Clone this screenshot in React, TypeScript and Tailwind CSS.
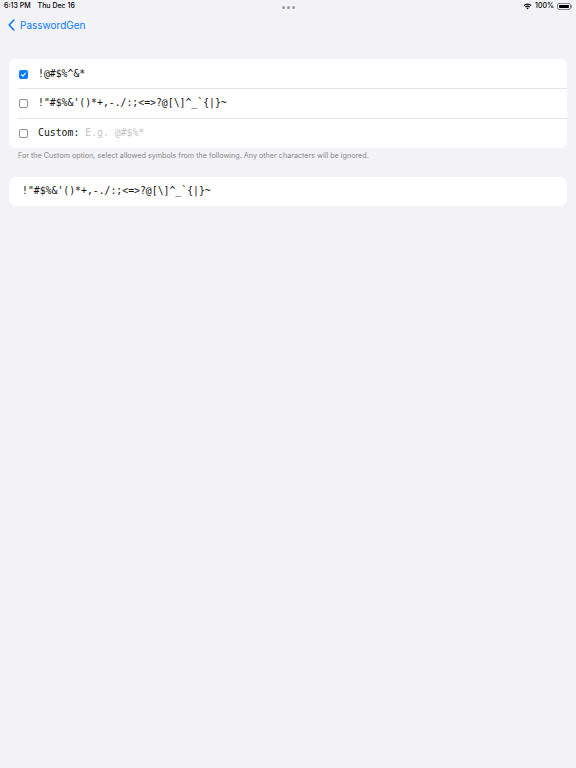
import React from "react";

function Checkbox({ checked }: { checked: boolean }) {
  if (checked) {
    return (
      <div className="w-[9px] h-[9px] rounded-[2px] bg-[#0a7aff] flex items-center justify-center">
        <svg width="7" height="7" viewBox="0 0 10 10" fill="none">
          <path d="M2 5.2 L4.2 7.4 L8 2.8" stroke="white" strokeWidth="1.5" strokeLinecap="round" strokeLinejoin="round" />
        </svg>
      </div>
    );
  }
  return <div className="w-[9px] h-[9px] rounded-[2px] border border-[#8e8e93] bg-white" />;
}

const mono = { fontFamily: '"DejaVu Sans Mono", "Liberation Mono", monospace' };

export default function App() {
  return (
    <div className="w-[576px] h-[768px] bg-[#f2f2f7] relative" style={{ fontFamily: 'Inter, "Noto Sans", sans-serif' }}>
      {/* Status bar */}
      <div className="h-[12px] flex items-center justify-between px-[4px] pt-[1px] text-[7px] font-medium text-black">
        <div className="flex gap-[7px]">
          <span>6:13 PM</span>
          <span>Thu Dec 16</span>
        </div>
        <div className="flex items-center gap-[3px]">
          <svg width="9" height="7" viewBox="0 0 12 9">
            <path d="M6 8.5 L4.3 6.6 A2.5 2.5 0 0 1 7.7 6.6 Z" fill="black" />
            <path d="M2.6 4.9 A4.8 4.8 0 0 1 9.4 4.9 L8.4 5.9 A3.4 3.4 0 0 0 3.6 5.9 Z" fill="black" />
            <path d="M0.6 2.9 A7.6 7.6 0 0 1 11.4 2.9 L10.4 3.9 A6.2 6.2 0 0 0 1.6 3.9 Z" fill="black" />
          </svg>
          <span>100%</span>
          <div className="flex items-center">
            <div className="w-[14px] h-[7px] rounded-[2px] border border-[#888] p-[1px]">
              <div className="w-full h-full bg-black rounded-[1px]" />
            </div>
            <div className="w-[1px] h-[3px] bg-[#888] rounded-r" />
          </div>
        </div>
      </div>
      <div className="absolute top-[6px] left-[282px] flex gap-[2px]">
        <div className="w-[3px] h-[3px] rounded-full bg-[#9a9aa0]" />
        <div className="w-[3px] h-[3px] rounded-full bg-[#9a9aa0]" />
        <div className="w-[3px] h-[3px] rounded-full bg-[#9a9aa0]" />
      </div>

      {/* Nav */}
      <div className="h-[26px] flex items-center pl-[8px] text-[#0a7aff] text-[10px] gap-[5px]">
        <svg width="7" height="12" viewBox="0 0 7 12" fill="none">
          <path d="M5.8 1 L1.2 6 L5.8 11" stroke="#0a7aff" strokeWidth="1.6" strokeLinecap="round" strokeLinejoin="round" />
        </svg>
        <span>PasswordGen</span>
      </div>

      <div className="px-[9px] pt-[21px]">
        <div className="bg-white rounded-[7px]">
          <div className="h-[29px] flex items-center pl-[10px] gap-[10px] pt-[2px]">
            <Checkbox checked />
            <span className="text-[9.8px] text-[#111]" style={mono}>!@#$%^&amp;*</span>
          </div>
          <div className="ml-[9px] h-px bg-[#e4e4e8]" />
          <div className="h-[29px] flex items-center pl-[10px] gap-[10px]">
            <Checkbox checked={false} />
            <span className="text-[9.8px] text-[#111]" style={mono}>{"!\"#$%&'()*+,-./:;<=>?@[\\]^_`{|}~"}</span>
          </div>
          <div className="ml-[9px] h-px bg-[#e4e4e8]" />
          <div className="h-[29px] flex items-center pl-[10px] gap-[10px]">
            <Checkbox checked={false} />
            <span className="text-[9.8px] text-[#111]" style={mono}>Custom:</span>
            <span className="text-[9.8px] text-[#c4c4c8] -ml-[4px]" style={mono}>E.g. @#$%*</span>
          </div>
        </div>
        <div className="px-[9px] pt-[3px] text-[7.2px] text-[#86868b]">
          For the Custom option, select allowed symbols from the following. Any other characters will be ignored.
        </div>

        <div className="mt-[15px] bg-white rounded-[7px] h-[29px] flex items-center pl-[13px]">
          <span className="text-[9.8px] text-[#111]" style={mono}>{"!\"#$%&'()*+,-./:;<=>?@[\\]^_`{|}~"}</span>
        </div>
      </div>
    </div>
  );
}
